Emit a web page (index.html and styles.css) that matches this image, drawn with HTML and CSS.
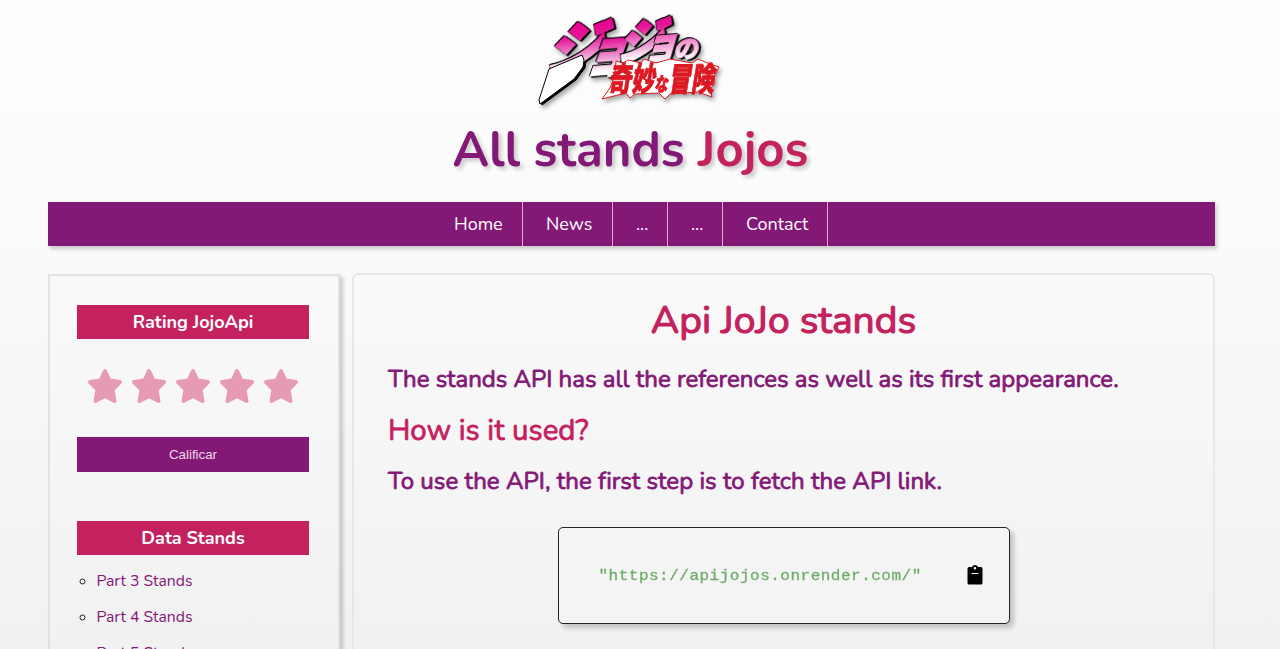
FILE: index.html
```html
<!DOCTYPE html>
<html lang="en">
<head>
<meta charset="utf-8">
<title>All stands Jojos</title>
<link rel="stylesheet" href="styles.css">
</head>
<body>
<div class="page">
  <header class="header">
    <svg class="logo" viewBox="0 0 220 120" width="220" height="120" role="img" aria-label="ジョジョの奇妙な冒険">
      <defs>
        <linearGradient id="pink" gradientUnits="userSpaceOnUse" x1="0" y1="-50" x2="0" y2="0">
          <stop offset="0" stop-color="#e6008c"/><stop offset=".35" stop-color="#e6179a"/><stop offset=".75" stop-color="#efa6d7"/><stop offset="1" stop-color="#fff"/>
        </linearGradient>
        <linearGradient id="pink-small" gradientUnits="userSpaceOnUse" x1="0" y1="-42" x2="0" y2="2">
          <stop offset="0" stop-color="#e6008c"/><stop offset="1" stop-color="#fff"/>
        </linearGradient>
      </defs>
      <g class="logo-shadow">
        <g class="logo-title">
          <text class="kana" transform="matrix(1 -.08 -.36 1 24 72)" font-size="59" textLength="56" lengthAdjust="spacingAndGlyphs">ジ</text>
          <path class="logo-blade" d="M29 69 62 55 64 60 63 67 54 79 20 104 19 100Z"/>
          <text class="kana" transform="matrix(1 -.08 -.36 1 64 73)" font-size="56" textLength="40" lengthAdjust="spacingAndGlyphs">ョ</text>
          <text class="kana" transform="matrix(1 -.08 -.36 1 96 61)" font-size="49" textLength="44" lengthAdjust="spacingAndGlyphs">ジ</text>
          <text class="kana kana-small" transform="matrix(1 -.08 -.3 1 123 61)" font-size="42" textLength="33" lengthAdjust="spacingAndGlyphs">ョ</text>
          <text class="kana kana-small kana-no" transform="matrix(1 -.02 -.2 1 153 58)" font-size="25">の</text>
        </g>
        <path class="logo-burst" d="M96 61 103 63 108 60 121 63 124 59 136 63 150 59 172 63 178 59 190 64 199 67 194 77 195 83 190 89 192 97 178 92 150 94 145 99 139 93 115 94 110 98 106 93 82 99 90 88 95 75Z"/>
        <text class="kanji" transform="matrix(1 0 -.16 1 88 91)" font-size="33" textLength="106" lengthAdjust="spacingAndGlyphs">奇妙<tspan font-size="19">な</tspan>冒険</text>
      </g>
    </svg>
    <h1 class="title">All stands <span class="accent">Jojos</span></h1>
  </header>
  <nav class="nav">
    <a class="nav-home">Home</a><a class="nav-news">News</a><a class="nav-more">...</a><a class="nav-more">...</a><a class="nav-contact">Contact</a>
  </nav>
  <div class="columns">
    <aside class="sidebar">
      <h2 class="side-title">Rating JojoApi</h2>
      <div class="stars">
        <svg class="star" viewBox="0 0 36 36"><path d="M18 3 22.5 12.5 33 14 25.5 21.5 27.5 33 18 28 8.500 33 10.500 21.500 3 14 13.500 12.500Z"/></svg>
        <svg class="star" viewBox="0 0 36 36"><path d="M18 3 22.5 12.5 33 14 25.5 21.5 27.5 33 18 28 8.500 33 10.500 21.500 3 14 13.500 12.500Z"/></svg>
        <svg class="star" viewBox="0 0 36 36"><path d="M18 3 22.5 12.5 33 14 25.5 21.5 27.5 33 18 28 8.500 33 10.500 21.500 3 14 13.500 12.500Z"/></svg>
        <svg class="star" viewBox="0 0 36 36"><path d="M18 3 22.5 12.5 33 14 25.5 21.5 27.5 33 18 28 8.500 33 10.500 21.500 3 14 13.500 12.500Z"/></svg>
        <svg class="star" viewBox="0 0 36 36"><path d="M18 3 22.5 12.5 33 14 25.5 21.5 27.5 33 18 28 8.500 33 10.500 21.500 3 14 13.500 12.500Z"/></svg>
      </div>
      <button class="rate">Calificar</button>
      <h2 class="side-title side-title-data">Data Stands</h2>
      <ul class="parts">
        <li><a>Part 3 Stands</a></li>
        <li><a>Part 4 Stands</a></li>
        <li><a>Part 5 Stands</a></li>
      </ul>
    </aside>
    <main class="main">
      <h1 class="main-title">Api JoJo stands</h1>
      <p class="lead lead-first">The stands API has all the references as well as its first appearance.</p>
      <h2 class="question">How is it used?</h2>
      <p class="lead lead-second">To use the API, the first step is to fetch the API link.</p>
      <div class="code">
        <code>"https://apijojos.onrender.com/"</code>
        <svg class="clipboard" viewBox="0 0 16 20" width="16" height="20"><path fill-rule="evenodd" d="M2 2H5Q6 0 8 0T11 2H14Q15.500 2 15.500 4V18Q15.500 19.500 14 19.500H2Q.500 19.500 .500 18V4Q.500 2 2 2ZM8 2A1.300 1.300 0 1 0 8 4.600 1.300 1.300 0 1 0 8 2M4.500 8V9H11.500V8Z"/></svg>
      </div>
    </main>
  </div>
</div>
</body>
</html>
```
FILE: styles.css
```css
* { box-sizing: border-box; }
html { height: 100%; overflow: hidden; }
body {
  margin: 0;
  height: 649px;
  overflow: hidden;
  background: linear-gradient(#fefefe, #fafafa 40%, #f1f1f1);
  font-family: Nunito, Lato, "Noto Sans CJK JP", sans-serif;
  color: #831876;
}
.page { width: 1263px; padding: 0 48px; }
.header { display: flex; flex-direction: column; align-items: center; height: 202px; }
.logo { flex: none; margin-right: 3px; overflow: visible; }
.logo-shadow { filter: drop-shadow(2px 3px 2px rgba(0, 0, 0, .35)); }
.logo-title { filter: drop-shadow(2px 1px 0 #000); }
.logo-blade { fill: #fff; stroke: #000; stroke-width: 1; }
.kana { font-family: "Noto Sans CJK JP", sans-serif; font-weight: 900; fill: url(#pink); stroke: url(#pink); stroke-width: 2.500; filter: drop-shadow(.7px .7px 0 #000) drop-shadow(-.7px -.7px 0 #000); }
.kana-small { fill: url(#pink-small); stroke: url(#pink-small); stroke-width: 2; }
.kana-no { stroke-width: 1; }
.logo-burst { fill: #fff; stroke: #dd1822; stroke-width: 1; }
.kanji { font-family: "Noto Sans CJK JP", sans-serif; font-weight: 900; fill: #dd1822; stroke: #dd1822; stroke-width: .8; }
.title { margin: -4px 2px 0 0; font-size: 49px; line-height: 67px; font-weight: 700; white-space: nowrap; text-shadow: 3px 3px 4px rgba(0, 0, 0, .2); }
.accent { color: #c4215f; }
.nav { display: flex; justify-content: center; height: 44px; background: #831876; box-shadow: 2px 3px 4px rgba(0, 0, 0, .2); font-size: 18px; line-height: 44px; color: #fff; }
.nav a { border-right: 1px solid #d6b0d2; padding-left: 23px; }
.nav .nav-home { width: 88px; padding-left: 19px; }
.nav .nav-news { width: 90px; }
.nav .nav-more { width: 55px; }
.nav .nav-contact { width: 105px; }
.columns { display: grid; grid-template-columns: 292px 863px; gap: 12px; margin-top: 28px; }
.sidebar { height: 375px; border: 2px solid #e2e2e2; border-bottom: 0; padding: 29px 29px 0 27px; box-shadow: 3px 3px 4px rgba(0, 0, 0, .2); }
.side-title { margin: 0; height: 34px; background: #c4215f; color: #fff; font-size: 18px; line-height: 34px; font-weight: 700; text-align: center; }
.stars { display: flex; justify-content: center; gap: 7.800px; height: 98px; padding-top: 29px; }
.star { width: 36px; height: 36px; fill: #e69ab3; stroke: #e69ab3; stroke-width: 4; stroke-linejoin: round; }
.rate { display: block; width: 100%; height: 35px; border: 0; background: #831876; color: #f0d8ed; font: 13.333px "Liberation Sans", sans-serif; }
.side-title-data { margin-top: 49px; }
.parts { margin: 8px 0 0; padding-left: 19.500px; list-style: circle; font-size: 15.700px; line-height: 36px; }
.parts li::marker { color: #222; }
.main { height: 376px; margin-top: -1px; border: 2px solid #e7e7e7; border-bottom: 0; border-radius: 6px 6px 0 0; padding: 0 34px; }
.main-title { margin: 18px 0 0; color: #c4215f; font-size: 39px; line-height: 56px; font-weight: 400; -webkit-text-stroke: 1.200px; text-align: center; }
.lead { margin: 0; font-size: 24px; line-height: 34px; -webkit-text-stroke: .8px; white-space: nowrap; }
.lead-first { margin-top: 13px; }
.question { margin: 14px 0 0; color: #c4215f; font-size: 29.400px; line-height: 40px; font-weight: 400; -webkit-text-stroke: .8px; }
.lead-second { margin-top: 14px; letter-spacing: .06px; font-variant-ligatures: common-ligatures; }
.code { display: flex; align-items: center; justify-content: space-between; width: 452px; height: 97px; margin: 29px auto 0; padding: 0 26px 0 40px; border: 1px solid #222; border-radius: 5px; background: #f4f4f4; box-shadow: 4px 4px 5px rgba(0, 0, 0, .2); }
.code code { font: 16px/20px "Liberation Mono", monospace; letter-spacing: .5px; color: #6cae67; -webkit-text-stroke: .3px; transform: scaleY(.9); }
.clipboard { margin-bottom: 1px; fill: #000; }
```
